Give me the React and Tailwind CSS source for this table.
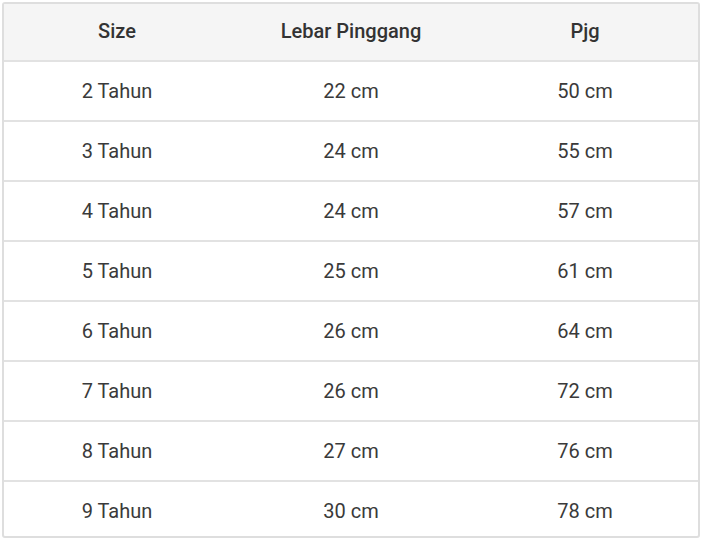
import React from "react";

const rows = [
  ["2 Tahun", "22 cm", "50 cm"],
  ["3 Tahun", "24 cm", "55 cm"],
  ["4 Tahun", "24 cm", "57 cm"],
  ["5 Tahun", "25 cm", "61 cm"],
  ["6 Tahun", "26 cm", "64 cm"],
  ["7 Tahun", "26 cm", "72 cm"],
  ["8 Tahun", "27 cm", "76 cm"],
  ["9 Tahun", "30 cm", "78 cm"],
];

export default function App() {
  return (
    <div className="w-[702px] h-[540px] bg-white p-[2px]" style={{ fontFamily: "Roboto, 'Liberation Sans', sans-serif" }}>
      <div className="w-[698px] h-[536px] border-2 border-[#dedede] rounded-[3px] overflow-hidden">
        <div className="grid grid-cols-[226px_242px_226px] h-[58px] pb-[2px] bg-[#f5f5f5] border-b-2 border-[#e2e2e2] text-[20px] font-medium text-[#333]">
          <div className="flex items-center justify-center">Size</div>
          <div className="flex items-center justify-center">Lebar Pinggang</div>
          <div className="flex items-center justify-center">Pjg</div>
        </div>
        {rows.map((r, i) => (
          <div key={i} className="grid grid-cols-[226px_242px_226px] h-[60px] border-b-2 border-[#e2e2e2] text-[20px] text-[#3a3a3a]">
            {r.map((c, j) => (
              <div key={j} className="flex items-center justify-center">{c}</div>
            ))}
          </div>
        ))}
      </div>
    </div>
  );
}
